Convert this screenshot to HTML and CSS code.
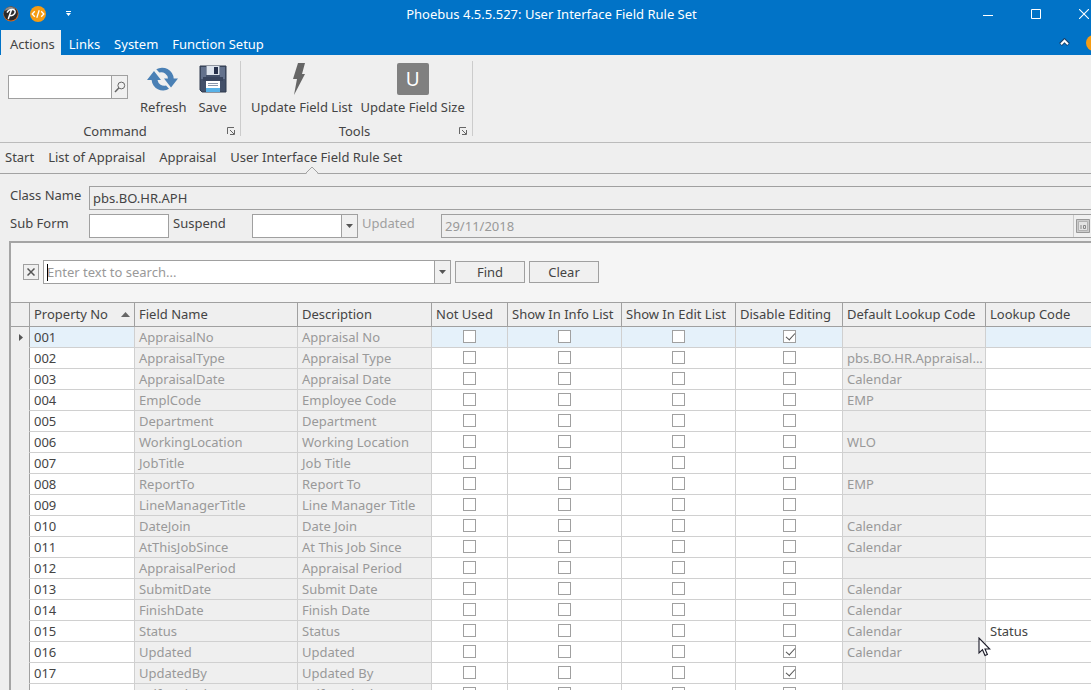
FILE: index.html
```html
<!DOCTYPE html>
<html lang="en">
<head>
<meta charset="utf-8">
<title>Phoebus 4.5.5.527: User Interface Field Rule Set</title>
<link rel="stylesheet" href="styles.css">
</head>
<body>
<div class="app">
  <header class="titlebar">
    <div class="quick">
      <svg class="logo" width="16" height="16" viewBox="0 0 16 16"><circle cx="8" cy="8" r="7.6" fill="#d9691e"/><circle cx="7.8" cy="7.6" r="7" fill="#2b2b2b"/><path d="M1.6 5A6.6 6.6 0 0 1 13 3.4C9 2.4 5 3 1.6 5z" fill="#8d8d8d"/><path d="M4.3 6.2C5.4 4.2 7.5 3.4 9.6 3.6c2.6.3 3.2 2.2 2 4-.9 1.3-2.6 2.2-4.3 2M8.3 4.200 5.400 12.600" fill="none" stroke="#fff" stroke-width="1.500" stroke-linecap="round"/></svg>
      <svg width="16" height="16" viewBox="0 0 16 16"><circle cx="8" cy="8" r="8" fill="#f59c13"/><path d="M4.800 5.300 2.200 8l2.600 2.700M11.200 5.300 13.800 8l-2.600 2.700M9.200 4.300 6.800 11.700" fill="none" stroke="#fff" stroke-width="1.300"/></svg>
      <button class="plain more" aria-label="Customize toolbar"><svg width="7" height="6" viewBox="0 0 7 6"><path d="M1 0h5v1H1zM1 2h5L3.500 5z" fill="#fff"/></svg></button>
    </div>
    <h1 class="title">Phoebus 4.5.5.527: User Interface Field Rule Set</h1>
    <div class="winbtns">
      <button class="plain" aria-label="Minimize"><svg width="10" height="10" viewBox="0 0 10 10"><path d="M0 6.500h10" stroke="#fff"/></svg></button>
      <button class="plain" aria-label="Maximize"><svg width="10" height="10" viewBox="0 0 10 10"><path d="M.5.500h9v9h-9z" fill="none" stroke="#fff"/></svg></button>
      <button class="plain" aria-label="Close"><svg width="10" height="10" viewBox="0 0 10 10"><path d="M0 0l10 10M10 0 0 10" stroke="#fff" stroke-width="1.100"/></svg></button>
    </div>
  </header>
  <nav class="tabs">
    <button class="tab active">Actions</button>
    <button class="tab">Links</button>
    <button class="tab">System</button>
    <button class="tab">Function Setup</button>
    <div class="tabs-end">
      <button class="plain" aria-label="Collapse ribbon"><svg width="11" height="9" viewBox="0 0 11 9"><path d="M1.500 6.500 5.500 2.500l4 4" fill="none" stroke="#16406b" stroke-width="4"/><path d="M2 6.200 5.500 2.700 9 6.200" fill="none" stroke="#fff" stroke-width="2"/></svg></button>
      <span class="dot"></span>
    </div>
  </nav>
  <section class="ribbon">
    <div class="group command">
      <div class="tools">
        <div class="combo lookup">
          <input type="text" aria-label="Command">
          <button aria-label="Search"><svg width="12" height="12" viewBox="0 0 12 12"><circle cx="7.300" cy="4.500" r="3.400" fill="none" stroke="#666"/><path d="M4.800 7 1 11" stroke="#666" stroke-width="1.500"/></svg></button>
        </div>
        <button class="tool"><svg width="32" height="32" viewBox="0 0 32 32"><g fill="#4a80b5"><path d="M0 17 7 8l7 9H10.500A6.800 6.800 0 0 0 19 22.500l3 3.300A11.500 11.500 0 0 1 4.600 17z"/><path d="M31 15.500 24 24.500l-7-9h4A6.800 6.800 0 0 0 12.300 9.500L9.300 6.300A11.500 11.500 0 0 1 26.700 15.500z"/></g></svg><span>Refresh</span></button>
        <button class="tool"><svg width="32" height="32" viewBox="0 0 32 32"><path d="M3 3h26v26H5l-2-2z" fill="#435069" stroke="#303a4f"/><path d="M4 4h5v12H4zM23 4h5v12h-5z" fill="#63718c"/><path d="M9.500 3h13v9h-13z" fill="#dde3ec"/><path d="M17 4h4v7h-4z" fill="#26304a"/><path d="M6 14h20v4H6z" fill="#39455e"/><path d="M9 18h14v8H9z" fill="#fff"/><path d="M9 25h14v4H9z" fill="#58b2e8"/><path d="M11 20.500h10M11 22.500h10" stroke="#8996ab"/></svg><span>Save</span></button>
      </div>
      <div class="caption"><span>Command</span><button class="plain launch" aria-label="Command options"><svg width="8" height="8" viewBox="0 0 8 8"><path d="M.5 7V.5H7M3 3l4 4M7.500 3v4.500H3" fill="none" stroke="#666"/></svg></button></div>
    </div>
    <div class="group updates">
      <div class="tools">
        <button class="tool"><svg width="32" height="32" viewBox="0 0 32 32"><path d="M12 0h7l-3 11h3L8 32l3-16H7z" fill="#666"/></svg><span>Update Field List</span></button>
        <button class="tool"><span class="letter">U</span><span>Update Field Size</span></button>
      </div>
      <div class="caption"><span>Tools</span><button class="plain launch" aria-label="Tools options"><svg width="8" height="8" viewBox="0 0 8 8"><path d="M.5 7V.5H7M3 3l4 4M7.500 3v4.500H3" fill="none" stroke="#666"/></svg></button></div>
    </div>
  </section>
  <nav class="crumbs">
    <a href="#">Start</a><a href="#">List of Appraisal</a><a href="#">Appraisal</a><a href="#" class="current">User Interface Field Rule Set<svg class="notch" width="14" height="8" viewBox="0 0 14 8"><path d="M1 8 7 1.500 13 8z" fill="#efefef"/><path d="M.5 7.500 7 1l6.500 6.500" fill="none" stroke="#a3a3a3"/></svg></a>
  </nav>
  <main class="content">
    <form class="form">
      <div class="line">
        <label for="cls">Class Name</label><input id="cls" class="box open" type="text" value="pbs.BO.HR.APH" readonly>
      </div>
      <div class="line">
        <label for="sub">Sub Form</label><input id="sub" class="box short" type="text">
        <label for="sus" class="suspend">Suspend</label>
        <div class="combo drop"><input id="sus" type="text"><button type="button" aria-label="Open list"><svg width="7" height="4" viewBox="0 0 7 4"><path d="M0 0h7L3.500 4z" fill="#555"/></svg></button></div>
        <label for="upd" class="updated">Updated</label>
        <div class="combo date"><input id="upd" type="text" value="29/11/2018" disabled><button type="button" disabled aria-label="Calendar"><svg width="14" height="14" viewBox="0 0 14 14"><path d="M.5.500h13v13H.5z" fill="#ccc" stroke="#999"/><path d="M2.500 2.500h9v9h-9z" fill="#e4e4e4" stroke="#b3b3b3"/><path d="M5 6v4M7.500 6.500h2v3h-2z" fill="none" stroke="#888"/></svg></button></div>
      </div>
    </form>
    <section class="panel">
      <div class="find">
        <button class="closer" aria-label="Close search"><svg width="8" height="8" viewBox="0 0 8 8"><path d="M.5.500l7 7M7.500.500l-7 7" stroke="#555" stroke-width="1.500"/></svg></button>
        <div class="combo search"><input type="text" placeholder="Enter text to search..." aria-label="Search text"><i class="caret"></i><button aria-label="Search history"><svg width="7" height="4" viewBox="0 0 7 4"><path d="M0 0h7L3.500 4z" fill="#555"/></svg></button></div>
        <button class="push">Find</button>
        <button class="push">Clear</button>
      </div>
      <table class="grid">
        <colgroup><col class="c-mark"><col class="c-no"><col class="c-field"><col class="c-desc"><col class="c-used"><col class="c-show"><col class="c-show"><col class="c-edit"><col class="c-default"><col></colgroup>
        <thead><tr><th></th><th><div class="sorted">Property No<svg width="9" height="5" viewBox="0 0 9 5"><path d="M0 5h9L4.500 0z" fill="#666"/></svg></div></th><th>Field Name</th><th>Description</th><th>Not Used</th><th>Show In Info List</th><th>Show In Edit List</th><th>Disable Editing</th><th>Default Lookup Code</th><th>Lookup Code</th></tr></thead>
        <tbody id="rows"></tbody>
      </table>
    </section>
  </main>
  <svg class="pointer" width="13" height="20" viewBox="0 0 13 20"><path d="M1 1v15l3.500-3.300L7 18.500l2.400-1L7 12h4.800z" fill="#fff" stroke="#1b1b28" stroke-width="1.100"/></svg>
</div>
<script src="grid.js"></script>
</body>
</html>
```
FILE: styles.css
```css
* { box-sizing: border-box; }
body { margin: 0; }
body, button, input { font: 13px/18px "Noto Sans", "Segoe UI", sans-serif; color: #444; }
button { padding: 0; cursor: default; }
svg { display: block; flex: none; }
.plain { border: 0; background: none; display: flex; }
.app { height: 100vh; display: flex; flex-direction: column; overflow: hidden; background: #efefef; }

.titlebar { display: grid; grid-template-columns: 1fr auto 1fr; align-items: center; height: 30px; flex: none; padding: 0 2px 2px 3px; background: #0173c7; }
.quick { display: flex; align-items: center; gap: 11px; }
.more { margin-left: 8px; }
.title { margin: 0; padding-left: 11px; font-size: 13px; font-weight: 400; line-height: 18px; color: #fff; }
.winbtns { display: flex; justify-content: flex-end; gap: 38px; }

.tabs { display: flex; height: 25px; flex: none; padding-left: 1px; background: #0173c7; overflow: hidden; }
.tab { border: 0; background: none; color: #fff; padding: 2px 6px 0 8px; white-space: nowrap; }
.tab.active { background: #efefef; color: #444; padding-left: 9px; }
.tabs-end { margin-left: auto; display: flex; align-items: center; gap: 16px; margin-right: -11px; }
.dot { width: 16px; height: 16px; border-radius: 50%; background: #f59c13; }

.ribbon { display: flex; height: 88px; flex: none; padding: 6px 0; border-bottom: 1px solid #bbb; }
.group { display: flex; flex-direction: column; border-right: 1px solid #ccc; }
.command { width: 241px; padding-left: 8px; }
.updates { width: 232px; padding-left: 6px; }
.tools { display: flex; align-items: flex-start; }
.tool { border: 0; background: none; display: flex; flex-direction: column; align-items: center; gap: 3px; padding: 2px 5px 0; white-space: nowrap; }
.updates .tool { padding: 2px 4px 0; }
.letter { width: 32px; height: 32px; border-radius: 2px; background: #808080; color: #fff; font-size: 19px; line-height: 32px; }
.caption { position: relative; display: flex; justify-content: center; margin-top: auto; padding-right: 10px; line-height: 10px; }
.command .caption { padding-right: 18px; }
.launch { position: absolute; right: 5px; top: 1px; }

.combo { position: relative; display: flex; height: 24px; border: 1px solid #a0a0a0; background: #fff; }
.combo input { flex: 1; min-width: 0; border: 0; outline: 0; padding: 0 3px; background: none; }
.combo button { width: 16px; flex: none; display: flex; align-items: center; justify-content: center; border: 0; border-left: 1px solid #a0a0a0; background: #f0f0f0; }
.lookup { width: 120px; margin: 14px 7px 0 0; }

.crumbs { display: flex; gap: 14px; height: 31px; flex: none; padding: 5px 5px 0; border-bottom: 1px solid #a3a3a3; }
.crumbs a { color: #444; text-decoration: none; white-space: nowrap; }
.current { position: relative; }
.notch { position: absolute; left: 50%; bottom: -1px; margin-left: -11px; }

.content { flex: 1; min-height: 0; display: flex; flex-direction: column; padding: 12px 0 0 9px; }
.form { display: flex; flex-direction: column; gap: 4px; }
.line { display: flex; }
.line label { width: 80px; flex: none; padding-left: 1px; }
.box { height: 24px; border: 1px solid #a0a0a0; padding: 0 3px; background: #fff; outline: 0; }
.open { flex: 1; min-width: 0; background: #efefef; border-right: 0; }
.short { width: 80px; }
.line .suspend { width: 83px; padding-left: 4px; }
.drop { width: 106px; }
.line .updated { width: 83px; padding-left: 4px; color: #a0a0a0; }
.date { flex: 1; border-right: 0; background: #efefef; }
.date input, .date button { color: #999; }
.date button { width: 18px; border-color: #ccc; }

.panel { flex: 1; min-height: 0; margin-top: 3px; border: solid #a5a5a5; border-width: 2px 0 0 2px; background: #f5f5f5; overflow: hidden; }
.find { display: flex; align-items: center; height: 59px; padding: 0 0 1px 12px; }
.closer { width: 16px; height: 16px; display: flex; align-items: center; justify-content: center; border: 1px solid #a0a0a0; background: #f0f0f0; margin-right: 4px; }
.search { width: 408px; margin-right: 4px; }
.search input::placeholder { color: #999; opacity: 1; }
.caret { position: absolute; left: 3px; top: 3px; width: 1px; height: 17px; background: #000; }
.push { width: 70px; height: 22px; margin-right: 4px; border: 1px solid #a0a0a0; background: #f0f0f0; }

.grid { width: 100%; table-layout: fixed; border-collapse: separate; border-spacing: 0; }
.grid th { height: 25px; padding: 0 4px 1px; border: solid #a0a0a0; border-width: 1px 1px 1px 0; background: #efefef; font-weight: 400; text-align: left; white-space: nowrap; }
.grid td { height: 21px; padding: 0 0 0 4px; border: solid #d0d0d0; border-width: 0 1px 1px 0; background: #fff; line-height: 18px; white-space: nowrap; }
.grid th:last-child, .grid td:last-child { border-right: 0; }
.grid td:first-child { border-right-color: #a0a0a0; border-bottom-color: #efefef; background: #efefef; padding: 0 0 0 7px; }
.grid td.locked { background: #efefef; color: #999; }
.grid .focused td { background: #e5f1fa; }
.grid .focused td:first-child, .grid .focused td.locked { background: #efefef; }
.grid td.tick { text-align: center; line-height: 0; padding: 0 0 1px; }
.tick input { appearance: none; position: relative; width: 13px; height: 13px; margin: 0; border: 1px solid #a0a0a0; background: #fff; vertical-align: middle; }
.tick input:checked::after { content: ""; position: absolute; left: 2px; top: 2px; width: 8px; height: 4px; border: solid #555; border-width: 0 0 1px 1px; transform: rotate(-48deg); }
.sorted { display: flex; align-items: center; justify-content: space-between; }
.c-mark { width: 19px; }
.c-no { width: 105px; }
.c-field { width: 163px; }
.c-desc { width: 134px; }
.c-used { width: 76px; }
.c-show { width: 114px; }
.c-edit { width: 107px; }
.c-default { width: 143px; }

.pointer { position: absolute; left: 978px; top: 637px; }
```
FILE: grid.js
```js
// name, description, editing disabled, default lookup, lookup
const fields = [
  ["AppraisalNo", "Appraisal No", true, "", ""],
  ["AppraisalType", "Appraisal Type", false, "pbs.BO.HR.Appraisal...", ""],
  ["AppraisalDate", "Appraisal Date", false, "Calendar", ""],
  ["EmplCode", "Employee Code", false, "EMP", ""],
  ["Department", "Department", false, "", ""],
  ["WorkingLocation", "Working Location", false, "WLO", ""],
  ["JobTitle", "Job Title", false, "", ""],
  ["ReportTo", "Report To", false, "EMP", ""],
  ["LineManagerTitle", "Line Manager Title", false, "", ""],
  ["DateJoin", "Date Join", false, "Calendar", ""],
  ["AtThisJobSince", "At This Job Since", false, "Calendar", ""],
  ["AppraisalPeriod", "Appraisal Period", false, "", ""],
  ["SubmitDate", "Submit Date", false, "Calendar", ""],
  ["FinishDate", "Finish Date", false, "Calendar", ""],
  ["Status", "Status", false, "Calendar", "Status"],
  ["Updated", "Updated", true, "Calendar", ""],
  ["UpdatedBy", "Updated By", true, "", ""],
  ["SelfRanked", "Self Ranked", false, "", ""]
];

const marker = '<svg width="5" height="7" viewBox="0 0 5 7"><path d="M1 0l4 3.500L1 7z" fill="#555"/></svg>';
const tick = (label, on) => `<td class="tick"><input type="checkbox" aria-label="${label}"${on ? " checked" : ""}></td>`;

document.getElementById("rows").innerHTML = fields.map(([name, desc, locked, preset, lookup], i) =>
  `<tr${i === 0 ? ' class="focused"' : ""}><td>${i === 0 ? marker : ""}</td><td>${String(i + 1).padStart(3, "0")}</td>` +
  `<td class="locked">${name}</td><td class="locked">${desc}</td>` +
  tick("Not Used") + tick("Show In Info List") + tick("Show In Edit List") + tick("Disable Editing", locked) +
  `<td class="locked">${preset}</td><td>${lookup}</td></tr>`).join("");
```
